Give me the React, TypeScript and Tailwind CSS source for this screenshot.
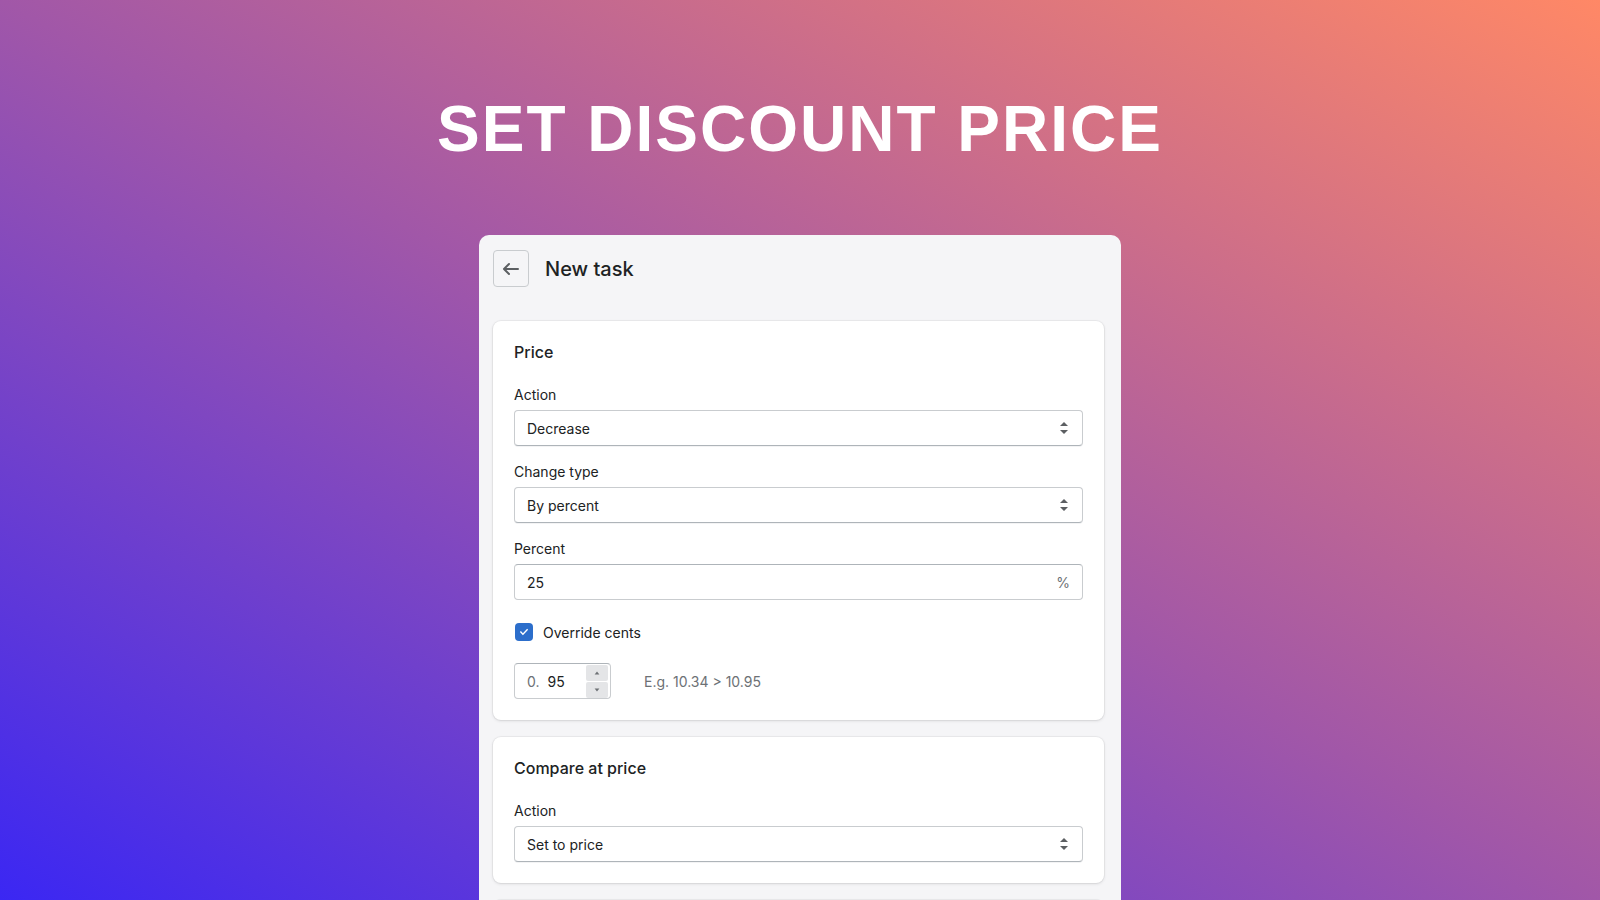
import React from 'react';

const ui = { fontFamily: 'Inter, "Noto Sans", "Liberation Sans", sans-serif' };

const SelectArrows = () => (
    <svg viewBox="0 0 20 20" className="w-5 h-5" fill="#5c5f62">
        <path d="M10 16l-4-4h8l-4 4zm0-12l4 4H6l4-4z" />
    </svg>
);

const Label: React.FC<{ text: string }> = ({ text }) => (
    <p className="text-[14px] leading-5 text-[#202223] mb-[5px]">{text}</p>
);

const SelectField: React.FC<{ label: string; value: string; className?: string }> = ({ label, value, className }) => (
    <div className={className}>
        <Label text={label} />
        <div className="h-9 flex items-center justify-between pl-3 pr-2 bg-white rounded-[4px] border border-[#c9cccf] border-b-[#aeb4b9] shadow-[0_1px_0_rgba(22,29,37,0.05)]">
            <span className="text-[14px] text-[#202223]">{value}</span>
            <SelectArrows />
        </div>
    </div>
);

const Card: React.FC<{ title: string; className?: string; children: React.ReactNode }> = ({ title, className, children }) => (
    <div className={`bg-white rounded-lg px-[21px] pt-[21px] pb-[21px] shadow-[0_0_0_1px_rgba(63,63,68,0.05),0_1px_3px_0_rgba(63,63,68,0.15)] ${className || ''}`}>
        <h2 className="text-[16px] leading-5 font-medium text-[#202223]">{title}</h2>
        {children}
    </div>
);

const App: React.FC = () => {
    return (
        <div
            className="w-full h-[900px] overflow-hidden flex flex-col items-center bg-[linear-gradient(to_top_right,#3b27f3_0%,#a157a8_50%,#ff8866_100%)]"
            style={ui}
        >
            <h1
                className="mt-[97px] text-[64px] leading-none font-bold text-white tracking-[2px] whitespace-nowrap"
                style={{ fontFamily: '"Liberation Sans", Arial, sans-serif' }}
            >
                SET DISCOUNT PRICE
            </h1>

            <div className="mt-[74px] w-[642px] flex-1 bg-[#f5f5f7] rounded-t-[10px] pl-[14px] pr-[17px] pt-[15px]">
                {/* header */}
                <div className="flex items-center h-[37px]">
                    <button className="w-9 h-[37px] flex items-center justify-center rounded-[4px] border border-[#c9cccf] bg-transparent">
                        <svg viewBox="0 0 20 20" className="w-5 h-5" fill="#5c5f62">
                            <path d="M17 9H5.414l3.293-3.293a.999.999 0 1 0-1.414-1.414l-5 5a.999.999 0 0 0 0 1.414l5 5a.997.997 0 0 0 1.414 0 .999.999 0 0 0 0-1.414L5.414 11H17a1 1 0 1 0 0-2z" />
                        </svg>
                    </button>
                    <h1 className="ml-4 text-[20px] leading-7 font-medium text-[#202223]">New task</h1>
                </div>

                <Card title="Price" className="mt-[34px]">
                    <SelectField label="Action" value="Decrease" className="mt-[23px]" />
                    <SelectField label="Change type" value="By percent" className="mt-4" />

                    <div className="mt-4">
                        <Label text="Percent" />
                        <div className="h-9 flex items-center justify-between px-3 bg-white rounded-[4px] border border-[#c9cccf] border-t-[#aeb4b9]">
                            <span className="text-[14px] text-[#202223]">25</span>
                            <span className="text-[14px] text-[#6d7175]">%</span>
                        </div>
                    </div>

                    <div className="mt-[22px] h-5 flex items-center">
                        <span className="ml-px w-[18px] h-[18px] rounded-[4px] bg-[#2c6ecb] flex items-center justify-center">
                            <svg viewBox="0 0 20 20" className="w-[16px] h-[16px]" fill="#ffffff">
                                <path d="M8.315 13.859l-3.182-3.417a.506.506 0 0 1 0-.684l.643-.683a.437.437 0 0 1 .642 0l2.22 2.393 4.942-5.327a.436.436 0 0 1 .643 0l.643.684a.504.504 0 0 1 0 .683l-5.91 6.35a.437.437 0 0 1-.642 0" />
                            </svg>
                        </span>
                        <span className="ml-[10px] text-[14px] text-[#202223]">Override cents</span>
                    </div>

                    <div className="mt-[21px] flex items-center">
                        <div className="w-[97px] h-9 flex items-center bg-white rounded-[4px] border border-[#c9cccf] border-t-[#aeb4b9] pl-3 pr-[2px]">
                            <span className="text-[14px] text-[#6d7175]">0.</span>
                            <span className="ml-2 text-[14px] text-[#202223]">95</span>
                            <div className="ml-auto flex flex-col gap-[1px]">
                                <span className="w-[22px] h-[16px] rounded-[2px] bg-[#e4e5e7] flex items-center justify-center">
                                    <svg viewBox="0 0 10 10" className="w-[8px] h-[8px]" fill="#6d7175"><path d="M5 3l3 4H2z" /></svg>
                                </span>
                                <span className="w-[22px] h-[16px] rounded-[2px] bg-[#e4e5e7] flex items-center justify-center">
                                    <svg viewBox="0 0 10 10" className="w-[8px] h-[8px]" fill="#6d7175"><path d="M5 7L2 3h6z" /></svg>
                                </span>
                            </div>
                        </div>
                        <span className="ml-[33px] text-[14px] text-[#6d7175]">E.g. 10.34 &gt; 10.95</span>
                    </div>
                </Card>

                <Card title="Compare at price" className="mt-[17px]">
                    <SelectField label="Action" value="Set to price" className="mt-[23px]" />
                </Card>

                <div className="mt-[17px] h-[120px] bg-white rounded-lg shadow-[0_0_0_1px_rgba(63,63,68,0.05),0_1px_3px_0_rgba(63,63,68,0.15)]" />
            </div>
        </div>
    );
};

export default App;
